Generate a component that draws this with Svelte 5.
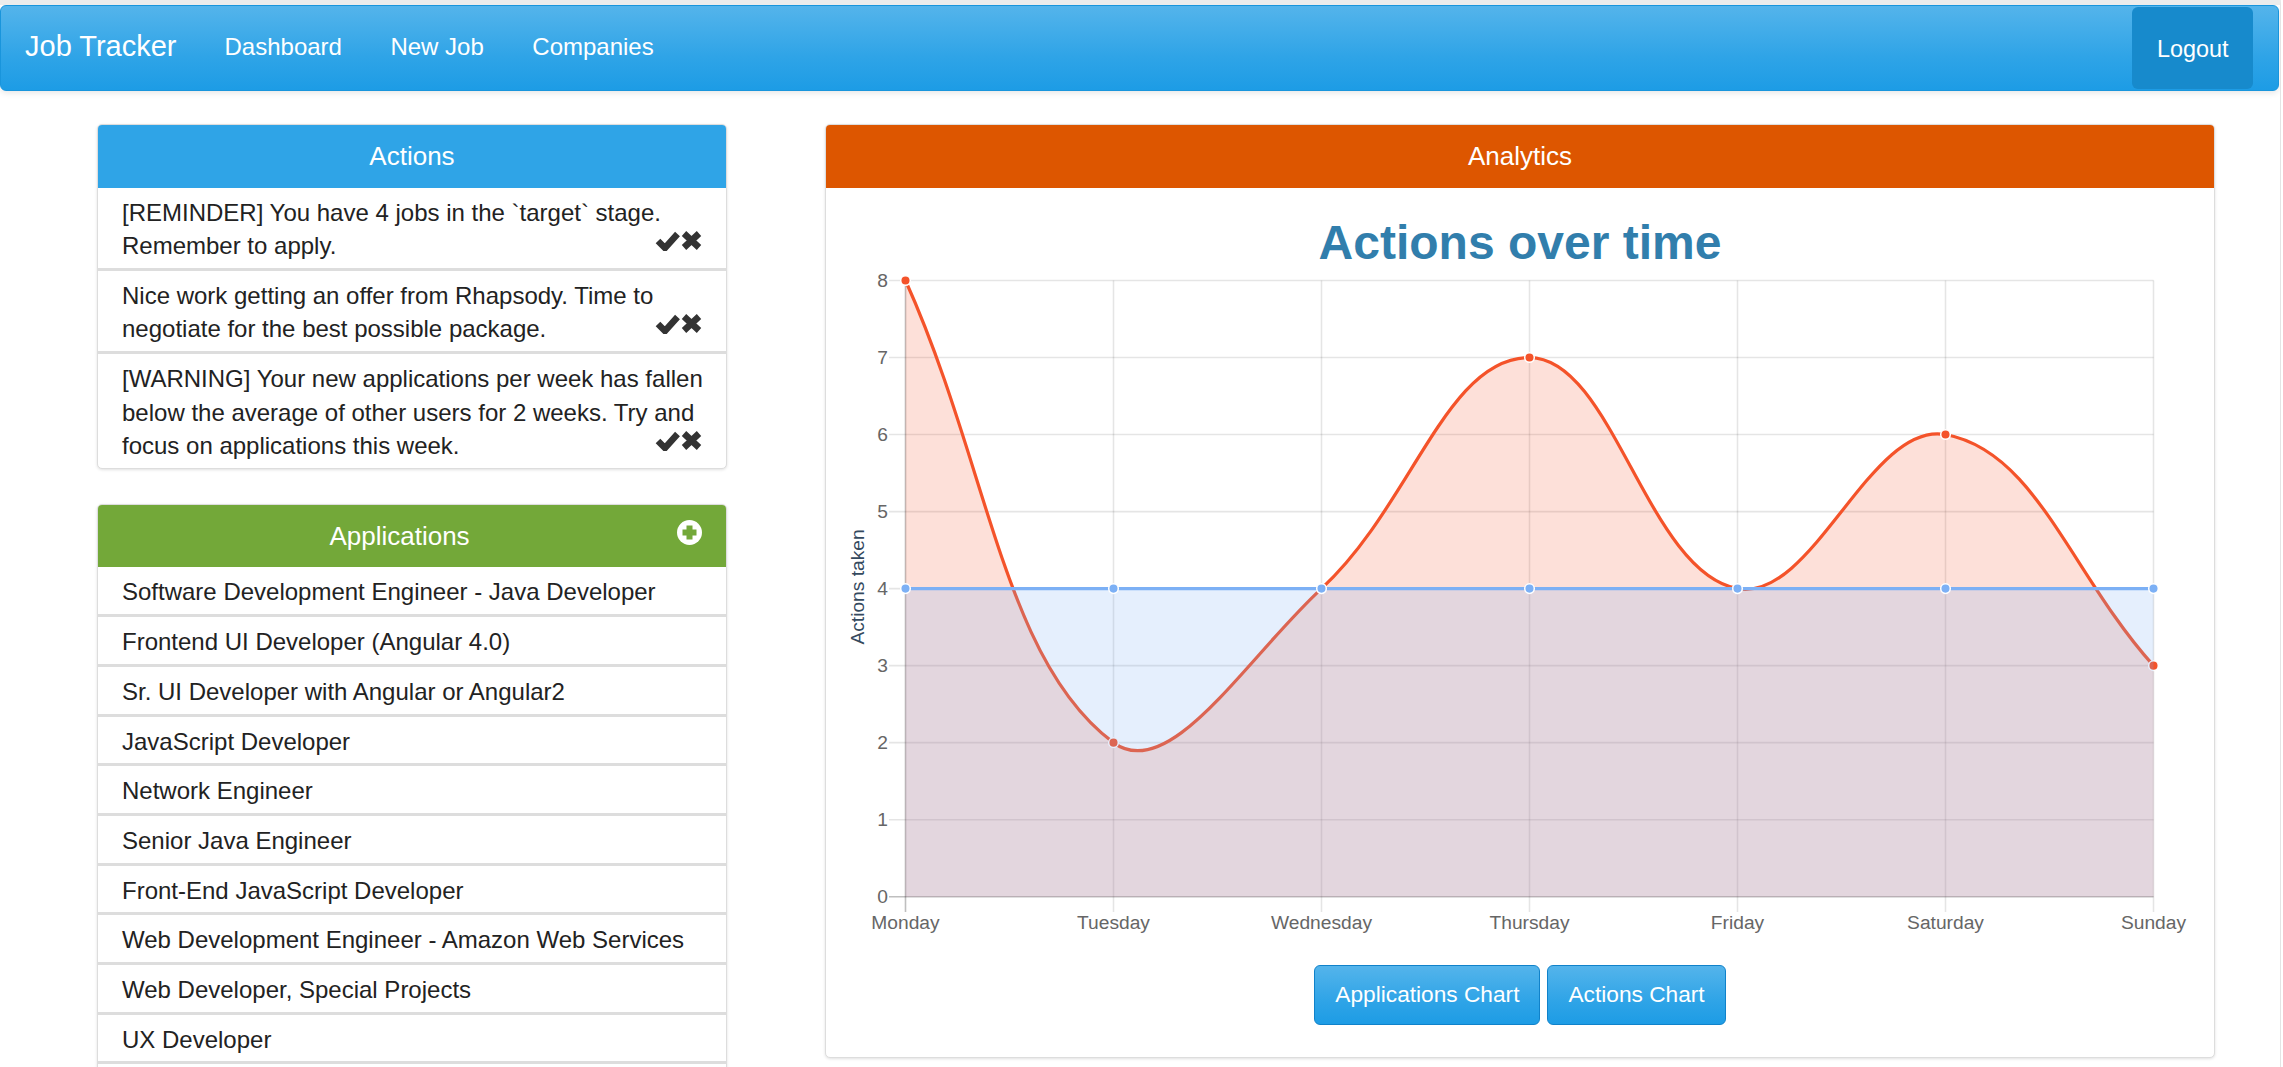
<script>
  const actions = [
    '[REMINDER] You have 4 jobs in the `target` stage. Remember to apply.',
    'Nice work getting an offer from Rhapsody. Time to negotiate for the best possible package.',
    '[WARNING] Your new applications per week has fallen below the average of other users for 2 weeks. Try and focus on applications this week.'
  ];

  const applications = [
    'Software Development Engineer - Java Developer',
    'Frontend UI Developer (Angular 4.0)',
    'Sr. UI Developer with Angular or Angular2',
    'JavaScript Developer',
    'Network Engineer',
    'Senior Java Engineer',
    'Front-End JavaScript Developer',
    'Web Development Engineer - Amazon Web Services',
    'Web Developer, Special Projects',
    'UX Developer',
    '\u00a0'
  ];

  const days = ['Monday', 'Tuesday', 'Wednesday', 'Thursday', 'Friday', 'Saturday', 'Sunday'];
  const ticks = [8, 7, 6, 5, 4, 3, 2, 1, 0];

  // plot area, in page pixels (the svg viewBox is page coordinates)
  const left = 905.5;
  const right = 2153.5;
  const top = 280.5;
  const bottom = 896.7;

  const xAt = (i) => left + ((right - left) / 6) * i;
  const yAt = (v) => bottom - ((bottom - top) / 8) * v;

  function toPoints(values) {
    return values.map((v, i) => ({ x: xAt(i), y: yAt(v) }));
  }

  // same spline as the chart lib: tension 0.4, control points capped to the plot area
  function linePath(pts) {
    const t = 0.4;
    const clamp = (v, a, b) => Math.max(a, Math.min(b, v));
    const ctrl = pts.map((p, i) => {
      const prev = pts[i - 1] || p;
      const next = pts[i + 1] || p;
      const d1 = Math.hypot(p.x - prev.x, p.y - prev.y);
      const d2 = Math.hypot(next.x - p.x, next.y - p.y);
      const total = d1 + d2 || 1;
      const fa = (t * d1) / total;
      const fb = (t * d2) / total;
      return {
        px: clamp(p.x - fa * (next.x - prev.x), left, right),
        py: clamp(p.y - fa * (next.y - prev.y), top, bottom),
        nx: clamp(p.x + fb * (next.x - prev.x), left, right),
        ny: clamp(p.y + fb * (next.y - prev.y), top, bottom)
      };
    });
    let d = `M${pts[0].x} ${pts[0].y}`;
    for (let i = 1; i < pts.length; i++) {
      d += ` C${ctrl[i - 1].nx} ${ctrl[i - 1].ny} ${ctrl[i].px} ${ctrl[i].py} ${pts[i].x} ${pts[i].y}`;
    }
    return d;
  }

  const areaClose = `L${right} ${bottom} L${left} ${bottom} Z`;

  const redPts = toPoints([8, 2, 4, 7, 4, 6, 3]);
  const bluePts = toPoints([4, 4, 4, 4, 4, 4, 4]);
  const redLine = linePath(redPts);
  const blueLine = linePath(bluePts);
</script>

<div class="page">
  <nav class="navbar">
    <a class="brand" href="#top">Job Tracker</a>
    <a class="nav-link" href="#top">Dashboard</a>
    <a class="nav-link" href="#top">New Job</a>
    <a class="nav-link" href="#top">Companies</a>
    <a class="logout" href="#top">Logout</a>
  </nav>

  <main class="content">
    <div class="side">
      <section class="panel">
        <h3 class="panel-head blue">Actions</h3>
        <ul>
          {#each actions as text}
            <li>
              {text}
              <span class="act-icons">
                <svg width="47" height="21" viewBox="0 0 47 21" fill="none" stroke="#333" stroke-width="6.5">
                  <path d="M3 11 L10 18 L22.500 4" />
                  <path d="M29 3.500 L44 17.500 M44 3.500 L29 17.500" />
                </svg>
              </span>
            </li>
          {/each}
        </ul>
      </section>

      <section class="panel">
        <h3 class="panel-head green">
          <svg class="add" width="25" height="25" viewBox="0 0 25 25">
            <circle cx="12.500" cy="12.500" r="12.500" fill="#fff" />
            <path d="M9.500 5.500 h6 v4 h4 v6 h-4 v4 h-6 v-4 h-4 v-6 h4 Z" fill="#73a839" />
          </svg>
          Applications
        </h3>
        <ul>
          {#each applications as job}
            <li>{job}</li>
          {/each}
        </ul>
      </section>
    </div>

    <section class="panel analytics">
      <h3 class="panel-head orange">Analytics</h3>
      <div class="panel-body">
        <h2 class="chart-title">Actions over time</h2>
        <svg class="chart" width="1387" height="680" viewBox="826 262 1387 680">
          {#each ticks as v}
            <line x1="889" x2={right} y1={yAt(v)} y2={yAt(v)} stroke={v === 0 ? 'rgba(0,0,0,0.25)' : 'rgba(0,0,0,0.1)'} stroke-width="1.6" />
            <text class="tick" x="888" y={yAt(v) + 6.500} text-anchor="end">{v}</text>
          {/each}
          {#each days as day, i}
            <line x1={xAt(i)} x2={xAt(i)} y1={top} y2="912" stroke={i === 0 ? 'rgba(0,0,0,0.25)' : 'rgba(0,0,0,0.1)'} stroke-width="1.6" />
            <text class="tick" x={xAt(i)} y="929" text-anchor="middle">{day}</text>
          {/each}
          <text class="axis-label" transform="translate(864 587) rotate(-90)" text-anchor="middle">Actions taken</text>

          <path d="{redLine} {areaClose}" fill="rgba(244,83,42,0.18)" />
          <path d={redLine} fill="none" stroke="#f4532a" stroke-width="3.2" />
          {#each redPts as p}
            <circle cx={p.x} cy={p.y} r="4.800" fill="#f4532a" stroke="#fff" stroke-width="1.5" />
          {/each}

          <path d="{blueLine} {areaClose}" fill="rgba(124,176,245,0.2)" />
          <path d={blueLine} fill="none" stroke="#7cb0f5" stroke-width="3.2" />
          {#each bluePts as p}
            <circle cx={p.x} cy={p.y} r="4.800" fill="#7cb0f5" stroke="#fff" stroke-width="1.5" />
          {/each}
        </svg>
        <div class="chart-buttons">
          <button>Applications Chart</button>
          <button>Actions Chart</button>
        </div>
      </div>
    </section>
  </main>
</div>

<style>
  :global(body) {
    margin: 0;
    background: #fff;
    overflow: hidden;
  }

  .page {
    width: 2281px;
    height: 1067px;
    overflow: hidden;
    box-sizing: border-box;
    border-top: 5px solid #ececec;
    border-right: 1px solid #e4e4e4;
    font-family: "Liberation Sans", Arial, sans-serif;
    font-size: 24px;
    line-height: 33.600px;
    color: #222;
  }

  .navbar {
    display: flex;
    align-items: stretch;
    height: 86px;
    width: 2279px;
    box-sizing: border-box;
    padding: 1px 25px 1px 0;
    background: linear-gradient(#54b4eb, #2fa4e7 60%, #1d9ce5);
    border: 1px solid #1995dc;
    border-radius: 6px;
    box-shadow: 0 2px 6px rgba(0, 0, 0, 0.1);
  }

  .navbar a {
    color: #fff;
    text-decoration: none;
  }

  .brand {
    font-size: 29px;
    padding: 23px 24px 0;
  }

  .nav-link {
    padding: 23px 24px 0;
  }

  .nav-link + .nav-link {
    margin-left: 0.500px;
  }

  .logout {
    margin-left: auto;
    padding: 26px 24.500px 0;
    background: #178acc;
    border-radius: 6px;
    font-size: 23.400px;
  }

  .content {
    display: flex;
    align-items: flex-start;
    gap: 98px;
    padding: 33px 0 0 97px;
  }

  .side {
    width: 630px;
    display: flex;
    flex-direction: column;
    gap: 35px;
  }

  .panel {
    border: 1px solid #ddd;
    border-radius: 5px;
    background: #fff;
    box-shadow: 0 1px 3px rgba(0, 0, 0, 0.12);
  }

  .panel-head {
    margin: 0;
    padding: 15px 24px 14px;
    font-size: 26px;
    font-weight: normal;
    line-height: 33.500px;
    text-align: center;
    color: #fff;
    border-radius: 4px 4px 0 0;
  }

  .blue {
    background: #2fa4e7;
  }

  .green {
    background: #73a839;
  }

  .orange {
    background: #dd5600;
  }

  .add {
    float: right;
  }

  ul {
    margin: 0;
    padding: 0;
    list-style: none;
  }

  li {
    padding: 8px 21px 5.100px 24px;
    border-bottom: 3px solid #ddd;
  }

  li:last-child {
    border-bottom: none;
  }

  .act-icons {
    float: right;
    height: 22px;
    line-height: 0;
    margin: 1px 3px 0 0;
  }

  .analytics {
    width: 1390px;
    box-sizing: border-box;
  }

  .panel-body {
    padding-bottom: 32px;
  }

  .chart-title {
    margin: 0;
    height: 74px;
    font-size: 48px;
    line-height: 109px;
    font-weight: bold;
    text-align: center;
    color: #317eac;
  }

  .chart {
    display: block;
  }

  .tick {
    font-size: 19.200px;
    fill: #666;
  }

  .axis-label {
    font-size: 19.200px;
    fill: #34495e;
  }

  .chart-buttons {
    display: flex;
    justify-content: center;
    gap: 7px;
    margin-top: 23px;
  }

  button {
    height: 60px;
    padding: 0 20px;
    font-family: inherit;
    font-size: 22.700px;
    color: #fff;
    background: linear-gradient(#54b4eb, #2fa4e7 60%, #1d9ce5);
    border: 1px solid #1082ca;
    border-radius: 6px;
  }
</style>
